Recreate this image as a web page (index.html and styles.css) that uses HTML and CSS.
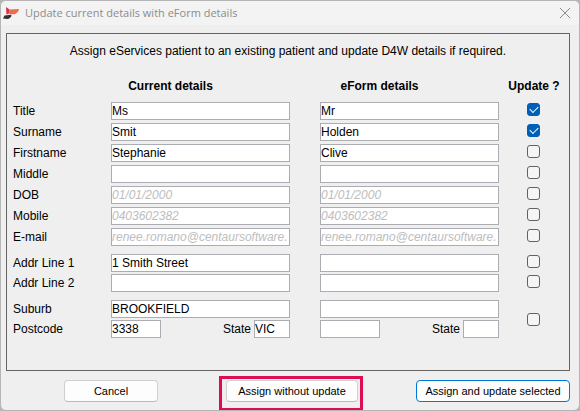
FILE: index.html
```html
<!DOCTYPE html>
<html lang="en">
<head>
    <meta charset="UTF-8">
    <meta name="viewport" content="width=device-width, initial-scale=1.0">
    <title>Update current details with eForm details</title>
    <link rel="stylesheet" href="styles.css">
</head>
<body>
    <form class="window">
        <header class="title-bar">
            <svg class="logo" viewBox="0 0 17 14" aria-hidden="true">
                <path d="M3 1 L6.500 3.500 L6.500 7 L3.500 8.500 Z" fill="#d42f3c"/>
                <path d="M6.500 3.500 L16 3 C15.500 6 13 8.300 10 8.300 L4 8.300 L6.500 7 Z" fill="#ee6c4d"/>
                <path d="M0 12.500 L1.500 9.500 L8.500 8.800 C8.500 11.500 6.500 13 4 13 Z" fill="#333336"/>
            </svg>
            <h1>Update current details with eForm details</h1>
            <button type="button" class="close" aria-label="Close">
                <svg viewBox="0 0 12 12"><path d="M1 1 L11 11 M11 1 L1 11"/></svg>
            </button>
        </header>

        <main class="panel">
            <p class="intro">Assign eServices patient to an existing patient and update D4W details if required.</p>

            <div class="row headings">
                <h2 class="current">Current details</h2>
                <h2 class="eform">eForm details</h2>
                <h2 class="update">Update ?</h2>
            </div>

            <div class="group">
                <div class="row">
                    <label for="title">Title</label>
                    <input type="text" class="current" id="title" value="Ms">
                    <input type="text" class="eform" aria-label="eForm title" value="Mr">
                    <input type="checkbox" class="update" aria-label="Update title" checked>
                </div>
                <div class="row">
                    <label for="surname">Surname</label>
                    <input type="text" class="current" id="surname" value="Smit">
                    <input type="text" class="eform" aria-label="eForm surname" value="Holden">
                    <input type="checkbox" class="update" aria-label="Update surname" checked>
                </div>
                <div class="row">
                    <label for="firstname">Firstname</label>
                    <input type="text" class="current" id="firstname" value="Stephanie">
                    <input type="text" class="eform" aria-label="eForm firstname" value="Clive">
                    <input type="checkbox" class="update" aria-label="Update firstname">
                </div>
                <div class="row">
                    <label for="middle">Middle</label>
                    <input type="text" class="current" id="middle">
                    <input type="text" class="eform" aria-label="eForm middle">
                    <input type="checkbox" class="update" aria-label="Update middle">
                </div>
                <div class="row">
                    <label for="dob">DOB</label>
                    <input type="text" class="current same" id="dob" value="01/01/2000" readonly>
                    <input type="text" class="eform same" aria-label="eForm DOB" value="01/01/2000" readonly>
                    <input type="checkbox" class="update" aria-label="Update DOB">
                </div>
                <div class="row">
                    <label for="mobile">Mobile</label>
                    <input type="text" class="current same" id="mobile" value="0403602382" readonly>
                    <input type="text" class="eform same" aria-label="eForm mobile" value="0403602382" readonly>
                    <input type="checkbox" class="update" aria-label="Update mobile">
                </div>
                <div class="row">
                    <label for="email">E-mail</label>
                    <input type="text" class="current same" id="email" value="renee.romano@centaursoftware." readonly>
                    <input type="text" class="eform same" aria-label="eForm e-mail" value="renee.romano@centaursoftware." readonly>
                    <input type="checkbox" class="update" aria-label="Update e-mail">
                </div>
            </div>

            <div class="group tight">
                <div class="row">
                    <label for="addr1">Addr Line 1</label>
                    <input type="text" class="current" id="addr1" value="1 Smith Street">
                    <input type="text" class="eform" aria-label="eForm addr line 1">
                    <input type="checkbox" class="update" aria-label="Update addr line 1">
                </div>
                <div class="row">
                    <label for="addr2">Addr Line 2</label>
                    <input type="text" class="current" id="addr2">
                    <input type="text" class="eform" aria-label="eForm addr line 2">
                    <input type="checkbox" class="update" aria-label="Update addr line 2">
                </div>
            </div>

            <div class="row suburb">
                <label for="suburb">Suburb</label>
                <input type="text" class="current" id="suburb" value="BROOKFIELD">
                <input type="text" class="eform" aria-label="eForm suburb">
                <input type="checkbox" class="update" aria-label="Update suburb, postcode and state">
                <label for="postcode">Postcode</label>
                <div class="current pair">
                    <input type="text" class="postcode" id="postcode" value="3338">
                    <label for="state">State</label>
                    <input type="text" class="state" id="state" value="VIC">
                </div>
                <div class="eform pair">
                    <input type="text" class="postcode wide" aria-label="eForm postcode">
                    <label for="eform-state">State</label>
                    <input type="text" class="state" id="eform-state">
                </div>
            </div>
        </main>

        <footer class="actions">
            <button type="button" class="btn cancel">Cancel</button>
            <div class="assign">
                <div class="highlight">
                    <button type="button" class="btn without">Assign without update</button>
                </div>
                <button type="submit" class="btn default">Assign and update selected</button>
            </div>
        </footer>
    </form>
</body>
</html>
```
FILE: styles.css
```css
* {
    box-sizing: border-box;
}

body {
    margin: 0;
    background: #b5b5b5;
    font: 12px/18px "Liberation Sans", Arial, sans-serif;
    color: #000;
}

h1, h2, p {
    margin: 0;
}

input, button {
    font: inherit;
    color: inherit;
}

.window {
    overflow: hidden;
    background: #efefef;
    border: 1px solid #b5b5b5;
    border-radius: 6px;
}

/* title bar */
.title-bar {
    display: flex;
    align-items: center;
    height: 24px;
    padding: 0 8px 0 2px;
    background: #f3f3f3;
}

.logo {
    width: 17px;
    height: 14px;
}

.title-bar h1 {
    flex: 1;
    margin-left: 5px;
    font: 11px/18px "Open Sans", "Segoe UI", sans-serif;
    color: #8c8c8c;
}

.close {
    display: flex;
    padding: 0;
    background: none;
    border: none;
}

.close svg {
    width: 12px;
    height: 12px;
    fill: none;
    stroke: #8c8c8c;
}

/* details */
.panel {
    margin: 8px 9px 0 5px;
    padding: 8px 0 32px 6px;
    border: 1px solid #646464;
}

.intro {
    margin-right: 6px;
    text-align: center;
}

.row {
    display: grid;
    grid-template-columns: 98px 1fr 30px 1fr 70px;
}

.current {
    grid-column: 2;
}

.eform {
    grid-column: 4;
}

.update {
    grid-column: 5;
}

.headings {
    margin: 17px 0 7px;
    text-align: center;
}

.headings h2 {
    font-size: 12px;
}

.headings .current,
.headings .eform {
    margin-right: 60px;
}

.group {
    display: grid;
    gap: 3px;
    margin-bottom: 8px;
}

.tight {
    gap: 2px;
}

input[type="text"] {
    width: 100%;
    min-width: 0;
    height: 18px;
    padding: 0;
    background: #fff;
    border: 1px solid #abadb3;
    border-radius: 0;
}

input.same {
    font-style: italic;
    color: #bdbdbd;
}

input[type="checkbox"] {
    appearance: none;
    width: 13px;
    height: 13px;
    margin: 1px 0 0 28px;
    background: #f5f5f5;
    border: 1px solid #626262;
    border-radius: 3px;
}

input[type="checkbox"]:checked {
    position: relative;
    background: #005fb8;
    border-color: #005fb8;
}

input[type="checkbox"]:checked::after {
    content: "";
    position: absolute;
    top: 2px;
    left: 2px;
    width: 7px;
    height: 4px;
    border: solid #fff;
    border-width: 0 0 1px 1px;
    transform: rotate(-45deg);
}

.suburb {
    row-gap: 2px;
}

.suburb .update {
    grid-row: 1 / 3;
    align-self: center;
}

.pair {
    display: flex;
}

.pair label {
    margin: 0 3px 0 auto;
}

input.postcode {
    width: 50px;
}

input.wide {
    width: 60px;
}

input.state {
    width: 36px;
}

/* buttons */
.actions {
    display: flex;
    justify-content: space-between;
    padding: 9px 9px 8px 63px;
}

.assign {
    display: flex;
    gap: 58px;
}

.btn {
    height: 22px;
    padding: 0;
    background: #fdfdfd;
    border: 1px solid #d0d0d0;
    border-bottom-color: #bababa;
    border-radius: 4px;
    font-size: 11px;
}

.cancel {
    width: 94px;
}

.without {
    width: 132px;
}

.default {
    width: 154px;
    border-color: #0078d4;
}

.highlight {
    position: relative;
}

.highlight::before {
    content: "";
    position: absolute;
    inset: -4px -5px -9px -7px;
    border: 3px solid #de0b55;
    pointer-events: none;
}
```
